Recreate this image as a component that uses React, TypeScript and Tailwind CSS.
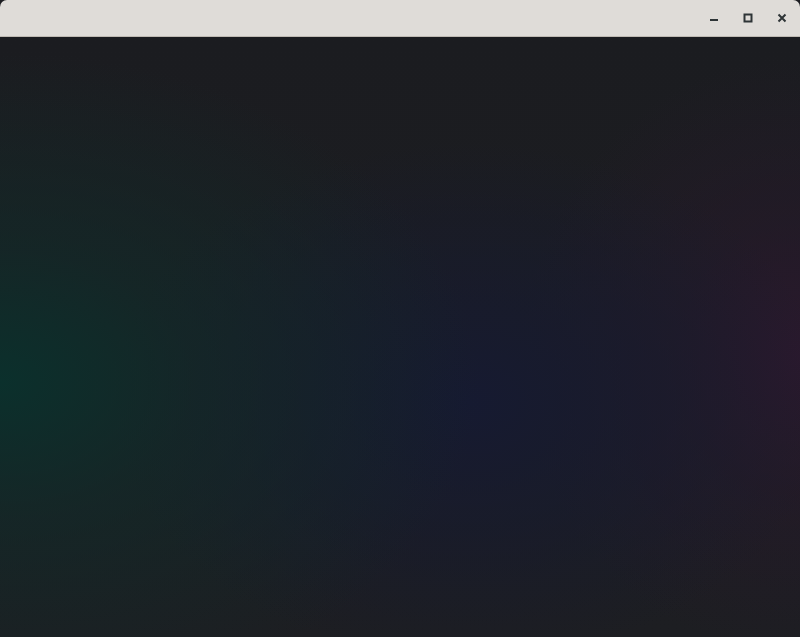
import React from "react";

function TitleBar() {
  return (
    <div className="flex h-[37px] shrink-0 items-center justify-end rounded-t-[7px] border-b border-[#bfbab3] bg-[#dfdcd8]">
      <div className="flex items-center gap-[18px] pr-[10px]">
        {/* minimize */}
        <button className="flex h-4 w-4 items-center justify-center">
          <svg width="10" height="10" viewBox="0 0 10 10">
            <rect x="1" y="6" width="8" height="2" fill="#2e3436" />
          </svg>
        </button>
        {/* maximize */}
        <button className="flex h-4 w-4 items-center justify-center">
          <svg width="10" height="10" viewBox="0 0 10 10">
            <rect x="1.5" y="1.5" width="7" height="7" fill="none" stroke="#2e3436" strokeWidth="2" />
          </svg>
        </button>
        {/* close */}
        <button className="flex h-4 w-4 items-center justify-center">
          <svg width="10" height="10" viewBox="0 0 10 10">
            <path d="M1.5 1.5 L8.5 8.5 M8.5 1.5 L1.5 8.5" stroke="#2e3436" strokeWidth="2" />
          </svg>
        </button>
      </div>
    </div>
  );
}

export default function App() {
  return (
    <div className="flex h-[637px] w-[800px] flex-col overflow-hidden bg-[#1c1d21]">
      <TitleBar />
      <div className="flex-1 bg-[radial-gradient(ellipse_480px_330px_at_0px_345px,#0b302c_0%,rgba(16,44,42,0.6)_40%,transparent_100%),radial-gradient(ellipse_360px_260px_at_470px_365px,#161a31_0%,rgba(22,26,48,0.5)_55%,transparent_100%),radial-gradient(ellipse_280px_300px_at_800px_320px,#2a192d_0%,rgba(40,24,44,0.5)_45%,transparent_100%),linear-gradient(#1b1c20,#1d1e22)]" />
    </div>
  );
}
